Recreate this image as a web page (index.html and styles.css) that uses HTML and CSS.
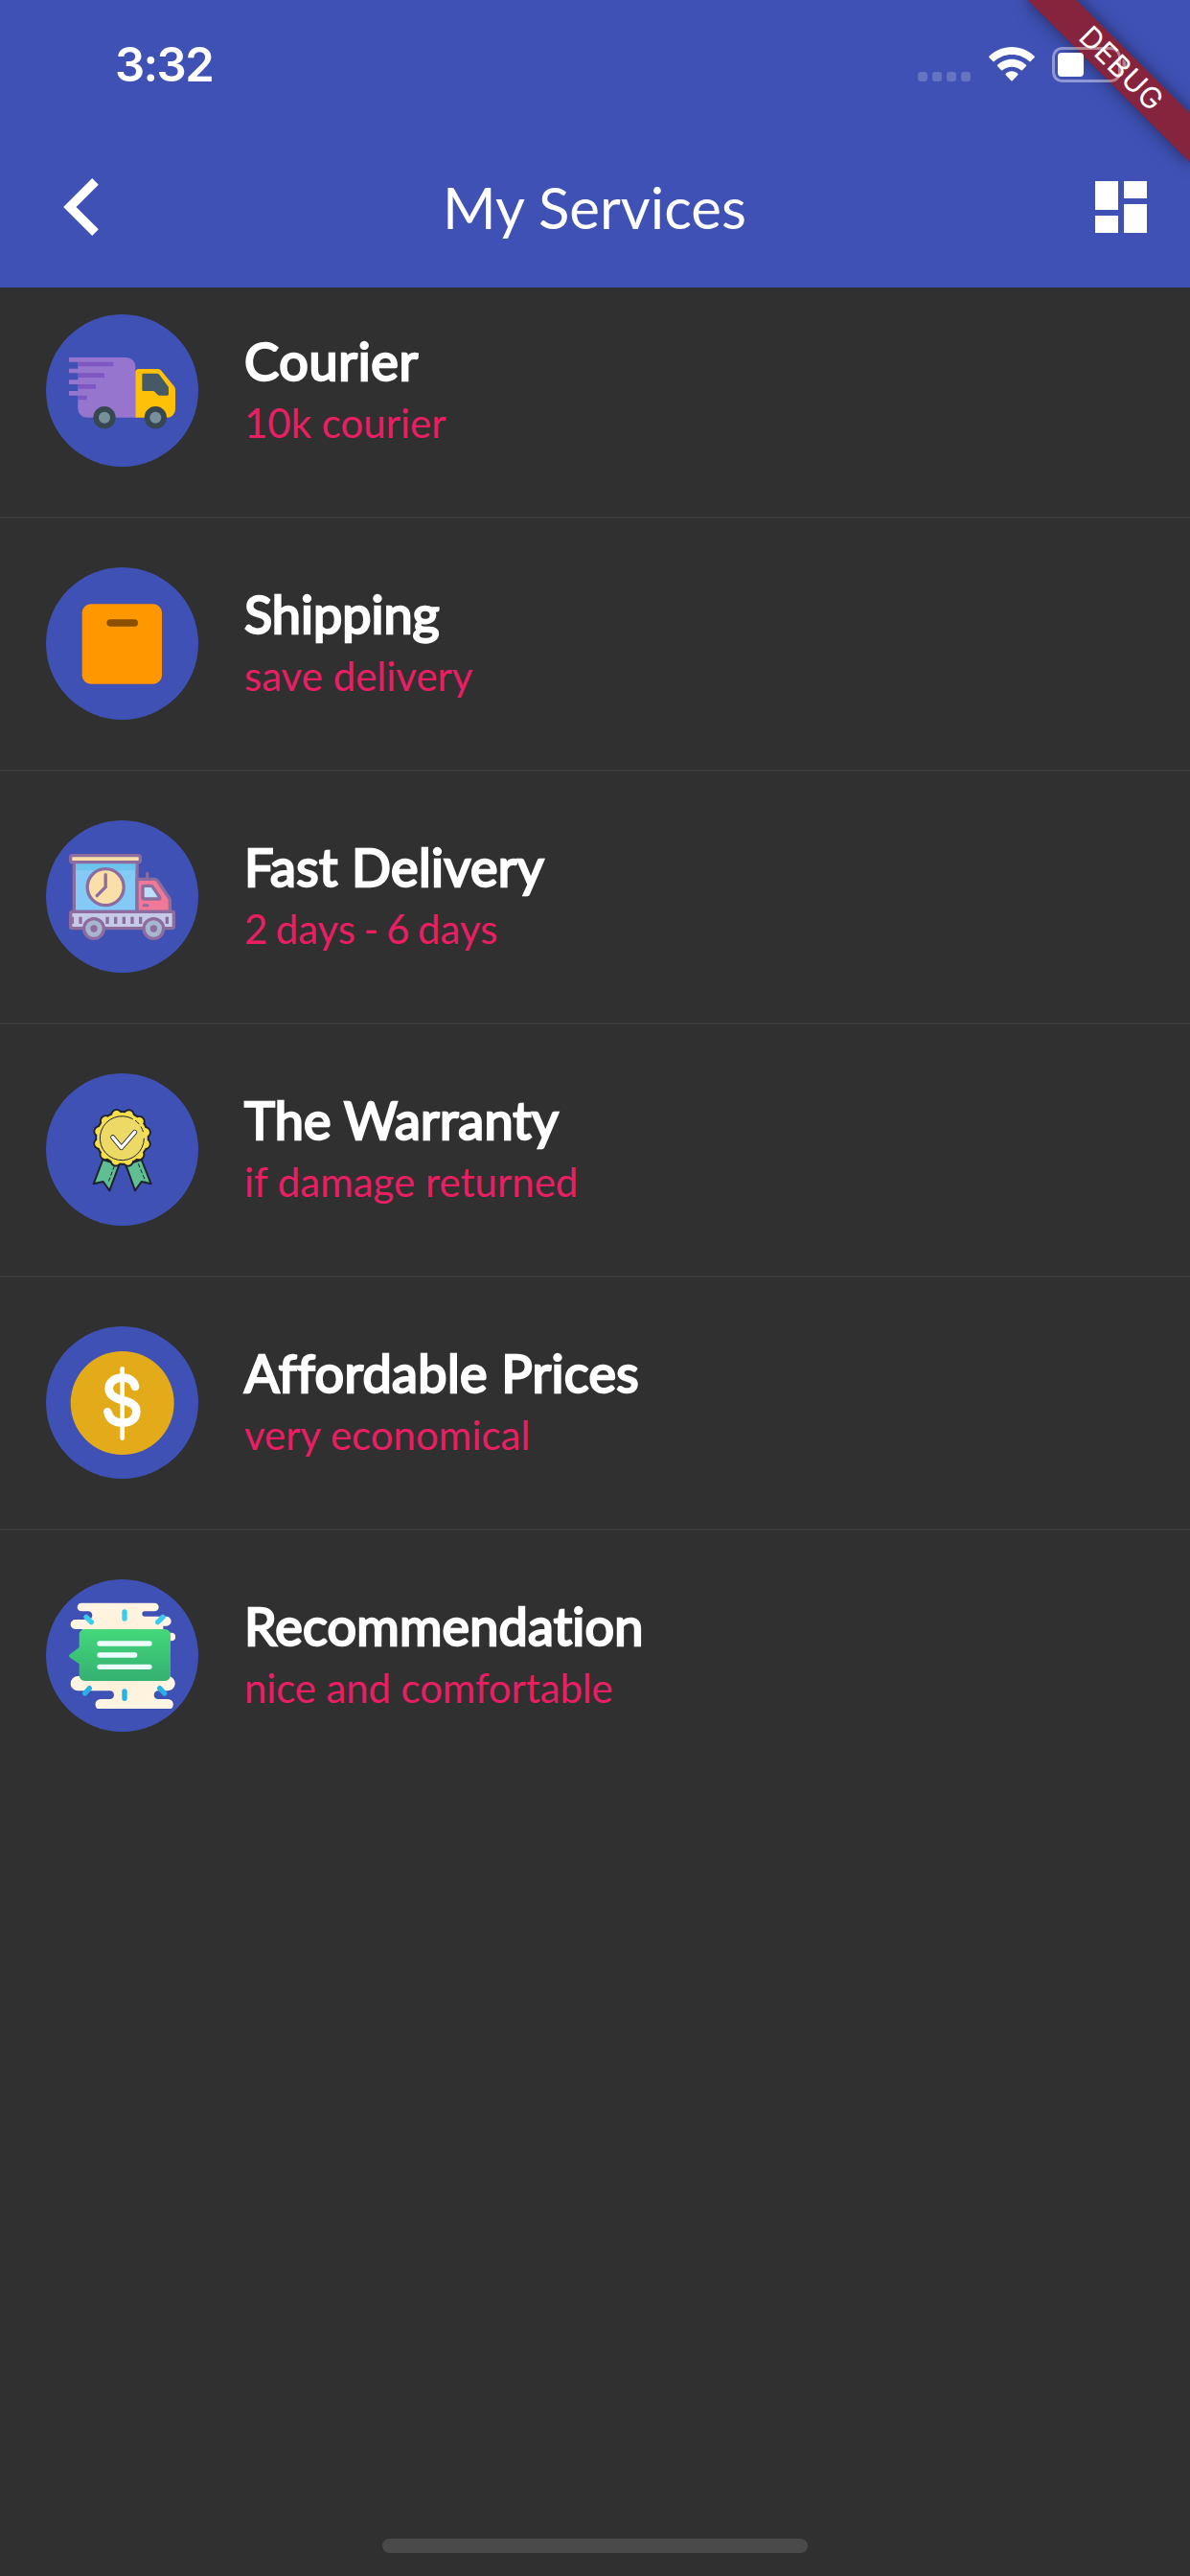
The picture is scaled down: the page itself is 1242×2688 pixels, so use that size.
FILE: index.html
```html
<!DOCTYPE html>
<html lang="en">
<head>
<meta charset="utf-8">
<title>My Services</title>
<link rel="stylesheet" href="styles.css">
</head>
<body>
<div class="screen">
  <header class="header">
    <div class="status-bar">
      <span class="time">3:32</span>
      <div class="indicators">
        <span class="signal"><i></i><i></i><i></i><i></i></span>
        <svg class="wifi" viewBox="395 147 144 108" aria-hidden="true">
          <path fill="#fff" d="M467 147c27 0 52 11 71 29c1 1 1 3 0 4l-12 12c-1 1-3 1-4 0c-15-13-34-21-55-21s-40 8-55 21c-1 1-3 1-4 0l-12-12c-1-1-1-3 0-4c19-18 44-29 71-29z"/>
          <path fill="#fff" d="M467 185c17 0 33 7 45 18c1 1 1 3 0 4l-12 13c-1 1-3 1-4 0c-8-7-18-11-29-11s-21 4-29 11c-1 1-3 1-4 0l-12-13c-1-1-1-3 0-4c12-11 28-18 45-18z"/>
          <path fill="#fff" d="M467 223c7 0 14 3 19 8c1 1 1 3 0 4l-17 18c-1 1-3 1-4 0l-17-18c-1-1-1-3 0-4c5-5 12-8 19-8z"/>
        </svg>
        <svg class="battery" viewBox="0 0 78 37" aria-hidden="true">
          <rect x="1.5" y="1.5" width="69" height="34" rx="9" fill="none" stroke="#fff" stroke-opacity=".42" stroke-width="3"/>
          <path d="M73.500 12.500c2.500 1 4 3.500 4 6s-1.500 5-4 6z" fill="#fff" fill-opacity=".42"/>
          <rect x="6" y="6" width="27" height="25" rx="4" fill="#fff"/>
        </svg>
      </div>
    </div>
    <nav class="app-bar">
      <svg class="back" viewBox="198 558 110 180" aria-label="Back"><path fill="#fff" d="M198 648l90-90 20 20-70 70 70 70-20 20z"/></svg>
      <h1 class="page-title">My Services</h1>
      <svg class="dashboard" viewBox="0 0 24 24" aria-label="Dashboard"><path fill="#fff" d="M3 13h8V3H3v10zm0 8h8v-6H3v6zm10 0h8V11h-8v10zm0-18v6h8V3h-8z"/></svg>
    </nav>
    <div class="ribbon-corner"><div class="ribbon">DEBUG</div></div>
  </header>

  <main class="services">
    <section class="service courier">
      <div class="avatar">
        <svg viewBox="126 126 333 333" aria-hidden="true">
          <path fill="#9575cd" d="M126 189h180a28 28 0 0 1 28 28v160H182a28 28 0 0 1-28-28v-41h-28v-14h28v-21h-28v-14h28v-21h-28v-14h28v-21h-28z"/>
          <path fill="#7e57c2" d="M154 203h111v14H154zM154 238h83v14h-83zM154 273h56v14h-56zM154 308h28v14h-28z"/>
          <path fill="#ffc107" d="M334 377V236a11 11 0 0 1 11-11h60q6 0 10 5l40 49q4 5 4 11v61a26 26 0 0 1-26 26z"/>
          <path fill="#455a64" d="M359 239h42q5 0 8 4l27 36q2 3 2 7v18q0 4-4 4h-24q-4 0-7-3l-8-8q-3-3-7-3h-29q-4 0-4-4v-47q0-4 4-4z"/>
          <circle cx="237" cy="377" r="35" fill="#37474f"/><circle cx="237" cy="377" r="18" fill="#78909c"/>
          <circle cx="397" cy="377" r="35" fill="#37474f"/><circle cx="397" cy="377" r="18" fill="#78909c"/>
        </svg>
      </div>
      <div class="copy"><h2>Courier</h2><p>10k courier</p></div>
    </section>

    <section class="service shipping">
      <div class="avatar">
        <svg viewBox="126 123 333 333" aria-hidden="true">
          <rect x="167" y="166" width="250" height="250" rx="27" fill="#ff9800"/>
          <rect x="244" y="214" width="98" height="22" rx="11" fill="#8a5000"/>
        </svg>
      </div>
      <div class="copy"><h2>Shipping</h2><p>save delivery</p></div>
    </section>

    <section class="service fast">
      <div class="avatar">
        <svg viewBox="126 120 333 333" aria-hidden="true">
          <g stroke="#8d6c9f" stroke-width="10" stroke-linejoin="round" stroke-linecap="round">
            <path fill="#83caf7" d="M142 178h197v156H142z"/>
            <path fill="#6dc4ef" stroke="none" d="M147 183h187v22H147z"/>
            <rect x="131" y="158" width="218" height="21" rx="6" fill="#fae0a8"/>
            <path fill="none" d="M371 214v16" stroke-width="9"/>
            <path fill="#f27897" d="M339 232h54q7 0 11 6l36 54q2 4 2 8v34H339z"/>
            <path fill="#bbdef9" d="M361 253h21q4 0 6 3l22 33q2 5-3 5h-46q-4 0-4-4v-33q0-4 4-4z"/>
            <path fill="none" d="M360 314h12" stroke-width="9"/>
            <rect x="131" y="334" width="323" height="52" rx="4" fill="#c5cae9"/>
            <path fill="none" stroke-linecap="butt" d="M136 350v22M162 350v22M246 350v22M272 350v22M298 350v22M324 350v22M350 350v22M433 350v22"/>
            <circle cx="240.500" cy="257" r="57" fill="#fae0a8"/>
            <path fill="none" d="M240.500 218v39l-27 27"/>
            <circle cx="204" cy="387" r="31" fill="#a9b6d0"/><circle cx="391" cy="387" r="31" fill="#a9b6d0"/>
          </g>
          <circle cx="204" cy="387" r="11" fill="#8d6c9f"/><circle cx="391" cy="387" r="11" fill="#8d6c9f"/>
        </svg>
      </div>
      <div class="copy"><h2>Fast Delivery</h2><p>2 days - 6 days</p></div>
    </section>

    <section class="service warranty">
      <div class="avatar">
        <svg viewBox="126 117 333 333" aria-hidden="true">
          <g fill="#5fbf93" stroke="#1f212b" stroke-width="6" stroke-linejoin="round">
            <path d="M232 315l-29 76 30-7 20 28 30-80z"/>
            <path d="M353 315l30 76-30-7-20 28-29-80z"/>
          </g>
          <path fill="none" stroke="#1f212b" stroke-width="3" stroke-dasharray="13 6" d="M268 335l-20 54M343 328l22 54"/>
          <g fill="none" stroke-linecap="round" transform="rotate(15 292.500 247)">
            <circle cx="292.500" cy="247" r="74" stroke="#1f212b" stroke-width="38" pathLength="12" stroke-dasharray="0 1"/>
            <circle cx="292.500" cy="247" r="85" fill="#1f212b"/>
            <circle cx="292.500" cy="247" r="79" fill="#f6df4d"/>
            <circle cx="292.500" cy="247" r="74" stroke="#f6df4d" stroke-width="27" pathLength="12" stroke-dasharray="0 1"/>
          </g>
          <circle cx="292.500" cy="248" r="69" fill="#ecd966"/>
          <path d="M326 188A69 69 0 1 0 361 248" fill="none" stroke="#1f212b" stroke-width="3"/>
          <path d="M333 192A69 69 0 0 1 359 230" fill="none" stroke="#1f212b" stroke-width="3" stroke-dasharray="18 9"/>
          <path d="M263 245l27 33 42-49" fill="none" stroke="#1f212b" stroke-width="15" stroke-linecap="round" stroke-linejoin="round"/>
          <path d="M263 245l27 33 42-49" fill="none" stroke="#fff" stroke-width="10" stroke-linecap="round" stroke-linejoin="round"/>
        </svg>
      </div>
      <div class="copy"><h2>The Warranty</h2><p>if damage returned</p></div>
    </section>

    <section class="service prices">
      <div class="avatar">
        <svg viewBox="126 129 333 333" aria-hidden="true">
          <circle cx="293" cy="297" r="162" fill="#e3ab19"/>
          <g fill="none" stroke="#fff" stroke-linecap="round">
            <path stroke-width="26" d="M333 246C330 228 315 218 293 218C268 218 251 232 251 251C251 270 266 281 292 288C321 295 337 303 337 323C337 346 319 359 293 359C266 359 252 346 247 325"/>
            <path stroke-width="14" d="M293 190v217"/>
          </g>
        </svg>
      </div>
      <div class="copy"><h2>Affordable Prices</h2><p>very economical</p></div>
    </section>

    <section class="service recommendation">
      <div class="avatar">
        <svg viewBox="126 126 333 333" aria-hidden="true">
          <defs>
            <linearGradient id="bubble" x1="0" y1="0" x2="0" y2="1"><stop offset="0" stop-color="#44d87b"/><stop offset="1" stop-color="#35b071"/></linearGradient>
            <radialGradient id="cream"><stop offset="0" stop-color="#fbecd2"/><stop offset="1" stop-color="#fff5e2"/></radialGradient>
          </defs>
          <path fill="url(#cream)" d="M165 128h229a13 13 0 0 1 0 26h-31a8 8 0 0 0 0 16h68a15 15 0 0 1 0 30h-10v21h26a13 13 0 0 1 0 26h-10v110a21 21 0 0 1-4 46h-28a13 13 0 0 0 0 26h31a16 16 0 0 1 0 33H225a16 16 0 0 1 0-33h29a13 13 0 0 0 0-26H154a23 23 0 0 1 0-46h15V210h-23a15 15 0 0 1 0-30h40a9 9 0 0 0 0-26h-21a13 13 0 0 1 0-26z"/>
          <path fill="url(#bubble)" d="M175 210h252a17 17 0 0 1 17 17v128a17 17 0 0 1-17 17H175a17 17 0 0 1-17-17v-36l-29-20q-6-5 0-10l29-22v-40a17 17 0 0 1 17-17z"/>
          <g fill="none" stroke-width="16" stroke-linecap="round">
            <path stroke="#3bcbeb" d="M300 156v21M180 172l16 16M420 172l-16 16"/>
            <path stroke="#25b3e6" d="M300 405v22M190 395l-14 16M410 395l15 16"/>
            <path stroke="#ecfcfa" d="M222 255h156M222 291h110M222 328h156"/>
          </g>
        </svg>
      </div>
      <div class="copy"><h2>Recommendation</h2><p>nice and comfortable</p></div>
    </section>
  </main>

  <footer class="home-area"><div class="home-indicator"></div></footer>
</div>
</body>
</html>
```
FILE: styles.css
```css
* { box-sizing: border-box; }

body {
  margin: 0;
  background: #303030;
  font-family: Lato, "Liberation Sans", sans-serif;
  color: #fff;
}

.screen {
  display: flex;
  flex-direction: column;
  width: 1242px;
  height: 2688px;
  overflow: hidden;
}

.header {
  position: relative;
  height: 300px;
  background: #3f51b5;
}

.status-bar {
  position: relative;
  z-index: 2;
  display: flex;
  justify-content: space-between;
  height: 132px;
  padding: 38px 66px 0 120px;
}

.time {
  font: 600 49px/60px Inter, sans-serif;
  letter-spacing: -1.6px;
}

.indicators {
  display: flex;
  align-items: flex-start;
  padding-top: 11px;
}

.signal {
  display: flex;
  gap: 5px;
  margin: 26px 19px 0 0;
}

.signal i {
  width: 10px;
  height: 10px;
  border-radius: 3px;
  background: rgba(255, 255, 255, 0.2);
}

.wifi {
  width: 48px;
  height: 36px;
  margin-right: 18px;
}

.battery {
  width: 78px;
  height: 37px;
}

.app-bar {
  display: flex;
  align-items: center;
  justify-content: space-between;
  height: 168px;
  padding: 0 36px 0 66px;
}

.back {
  width: 37px;
  height: 60px;
}

.page-title {
  margin: 0 0 0 4px;
  font-size: 60px;
  font-weight: 400;
  line-height: 72px;
}

.dashboard {
  width: 72px;
  height: 72px;
}

/* Diagonal build ribbon lying over the top-right corner */
.ribbon-corner {
  position: absolute;
  z-index: 1;
  top: 0;
  right: 0;
  width: 240px;
  height: 240px;
  overflow: hidden;
}

.ribbon {
  position: absolute;
  top: 54px;
  right: -48px;
  width: 240px;
  height: 36px;
  transform: rotate(45deg);
  background: #85243c;
  box-shadow: 0 0 18px rgba(0, 0, 0, 0.5);
  font: 400 30.6px/33px Inter, sans-serif;
  letter-spacing: 0.7px;
  text-align: center;
}

.services { flex: 1; }

.service {
  display: flex;
  gap: 48px;
  padding: 51px 48px 52px;
  border-bottom: 2px solid #3c3c3c;
}

.service:first-child { padding-top: 28px; }
.service:last-child { border-bottom: 0; }

.avatar {
  display: flex;
  align-items: center;
  justify-content: center;
  width: 159px;
  height: 159px;
  border-radius: 50%;
  background: #3f51b5;
}

.avatar svg {
  width: 111px;
  height: 111px;
}

.copy { padding-top: 16px; }

.copy h2 {
  margin: 0;
  font-size: 54px;
  font-weight: 400;
  line-height: 65px;
  font-variant-ligatures: none;
  -webkit-text-stroke: 2.4px #fff;
}

.copy p {
  margin: 7px 0 0;
  color: #e91e63;
  font-size: 42px;
  line-height: 50px;
  font-variant-ligatures: none;
}

.courier h2 { letter-spacing: 0.7px; }
.fast h2 { letter-spacing: 0.38px; }
.fast p { word-spacing: -2.4px; }
.warranty h2 { letter-spacing: 0.2px; }
.prices h2 { letter-spacing: 0.38px; }
.recommendation h2 { letter-spacing: 0.2px; }
.recommendation p { letter-spacing: -0.12px; }

.home-area {
  display: flex;
  justify-content: center;
  padding-bottom: 24px;
}

.home-indicator {
  width: 444px;
  height: 15px;
  border-radius: 8px;
  background: #4a4a4a;
}
```
